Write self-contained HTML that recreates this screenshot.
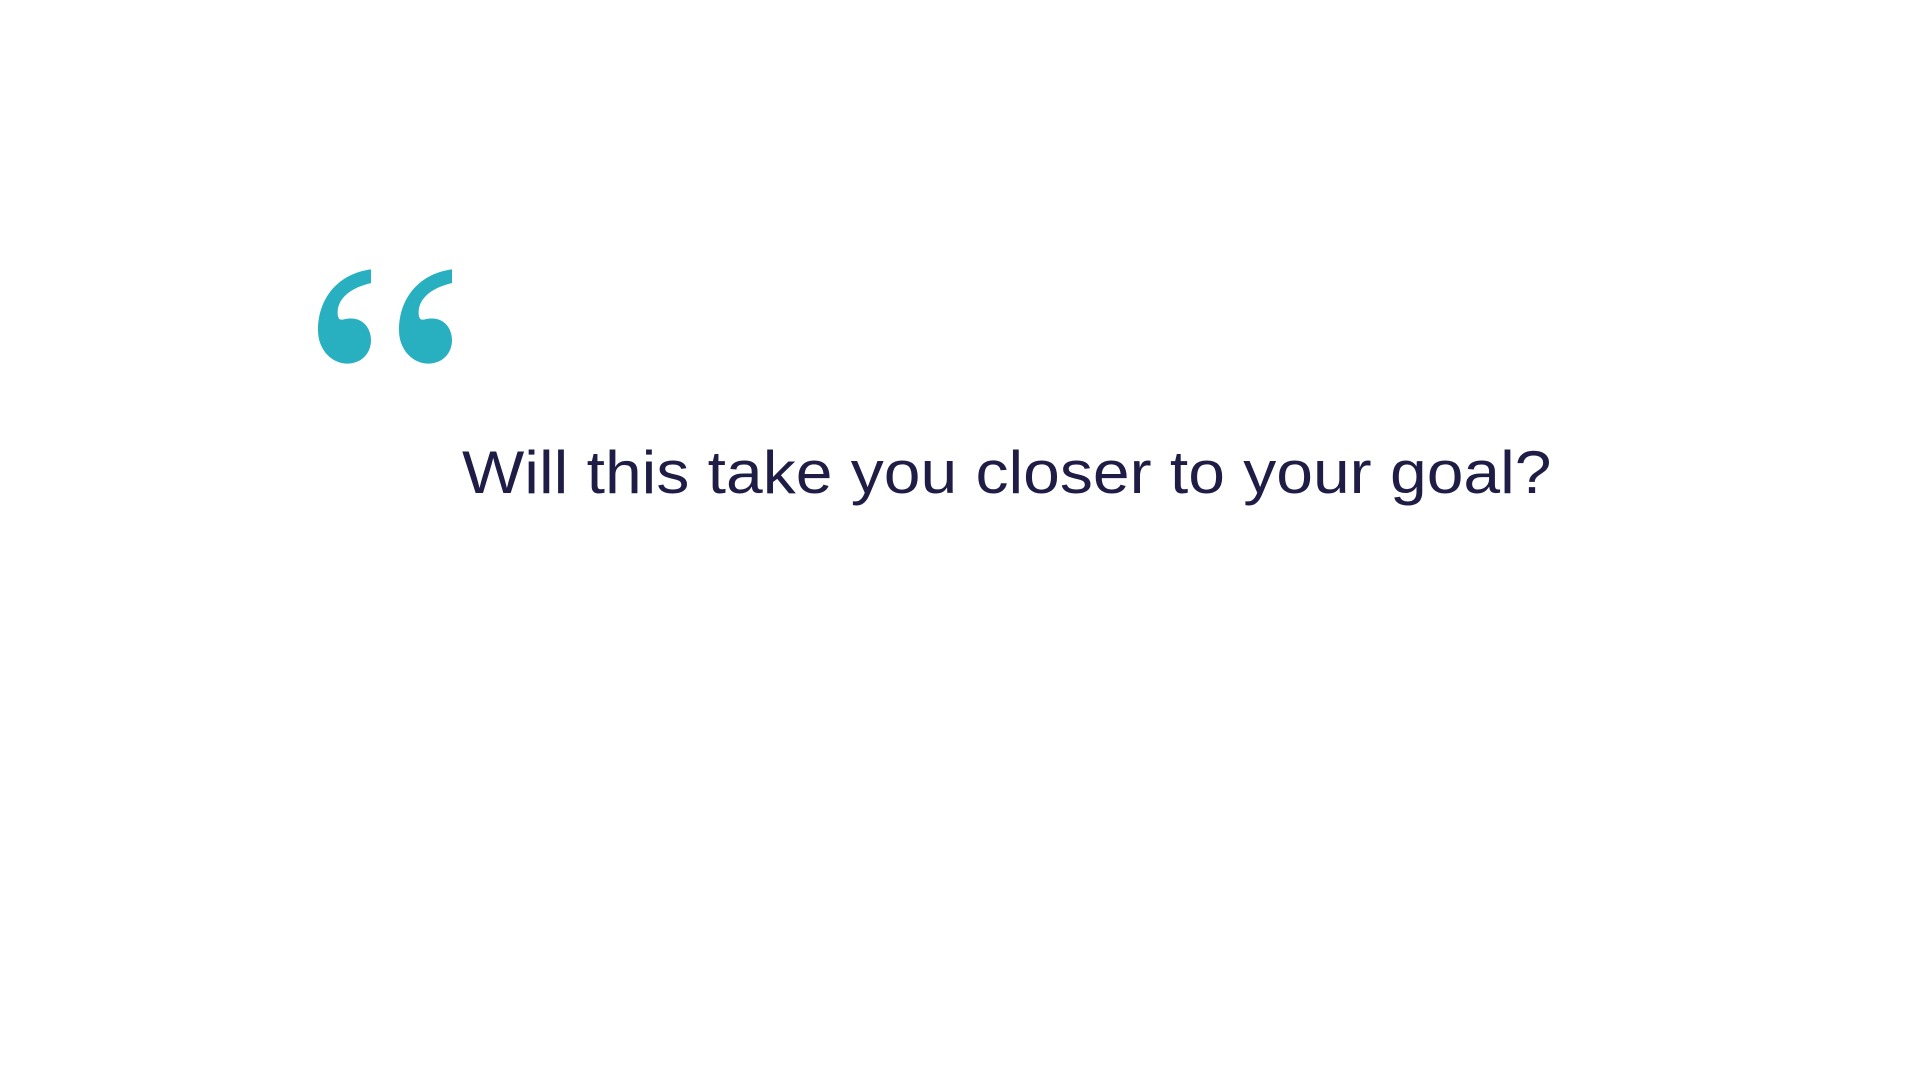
<!DOCTYPE html>
<html><head><style>
html,body{margin:0;padding:0;background:#fff;width:1920px;height:1080px;overflow:hidden}
.q{position:absolute;top:268px}
.t{position:absolute;left:462px;top:437px;font-family:"Liberation Sans",sans-serif;font-size:66px;color:#1f1d45;white-space:nowrap;line-height:66px;transform:scaleY(0.915);transform-origin:0 55px}
</style></head><body>
<svg class="q" style="left:318px" width="53" height="97" viewBox="0 0 54 96"><path fill="#29b0c0" d="M54,0 L54,14 C36,18 20,28 20,44 C20,50 22,52 26,51 C30,50 32,50 34,50 C46,50 54,60 54,72 C54,86 44,96 30,96 C14,96 0,82 0,62 C0,28 22,4 54,0 Z"/></svg>
<svg class="q" style="left:399px" width="53" height="97" viewBox="0 0 54 96"><path fill="#29b0c0" d="M54,0 L54,14 C36,18 20,28 20,44 C20,50 22,52 26,51 C30,50 32,50 34,50 C46,50 54,60 54,72 C54,86 44,96 30,96 C14,96 0,82 0,62 C0,28 22,4 54,0 Z"/></svg>
<div class="t">Will this take you closer to your goal?</div>
</body></html>
